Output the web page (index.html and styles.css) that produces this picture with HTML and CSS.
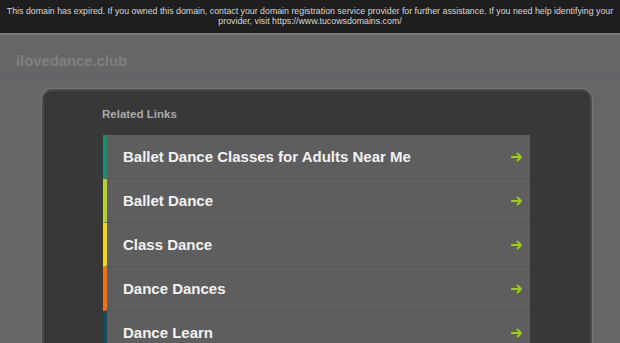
FILE: index.html
```html
<!DOCTYPE html>
<html lang="en">
<head>
    <meta charset="UTF-8">
    <meta name="viewport" content="width=device-width, initial-scale=1.0">
    <title>ilovedance.club</title>
    <link rel="stylesheet" href="styles.css">
</head>
<body>
    <div class="expired-bar">
        This domain has expired. If you owned this domain, contact your domain registration service provider for further assistance. If you need help identifying your provider, visit https://www.tucowsdomains.com/
    </div>

    <div class="header">
        <h1>ilovedance.club</h1>
    </div>

    <div class="panel">
        <h2>Related Links</h2>
        <ul class="links">
            <li class="link c1"><span>Ballet Dance Classes for Adults Near Me</span><svg class="arrow" viewBox="0 0 12 10"><path d="M1 5H11M7 1L11 5L7 9"/></svg></li>
            <li class="link c2"><span>Ballet Dance</span><svg class="arrow" viewBox="0 0 12 10"><path d="M1 5H11M7 1L11 5L7 9"/></svg></li>
            <li class="link c3"><span>Class Dance</span><svg class="arrow" viewBox="0 0 12 10"><path d="M1 5H11M7 1L11 5L7 9"/></svg></li>
            <li class="link c4"><span>Dance Dances</span><svg class="arrow" viewBox="0 0 12 10"><path d="M1 5H11M7 1L11 5L7 9"/></svg></li>
            <li class="link c5"><span>Dance Learn</span><svg class="arrow" viewBox="0 0 12 10"><path d="M1 5H11M7 1L11 5L7 9"/></svg></li>
        </ul>
    </div>
</body>
</html>
```

FILE: styles.css
```css
body {
    font-family: 'Liberation Sans', Arial, sans-serif;
    margin: 0;
    padding: 0;
    background: #666666;
    overflow: hidden;
}

.expired-bar {
    background: #1e1e1e;
    color: #d8d8d8;
    font-size: 8.8px;
    line-height: 9.5px;
    text-align: center;
    height: 26px;
    padding-top: 7px;
    border-bottom: 2px solid #7a7a7a;
    white-space: normal;
}

.header {
    height: 41px;
    border-bottom: 1px solid #5b6166;
    display: flex;
    align-items: center;
    padding-left: 16px;
}

.header h1 {
    margin: 0;
    font-size: 14.8px;
    color: #808080;
    padding-top: 11px;
}

.panel {
    margin: 12px 0 0 42px;
    width: 550px;
    height: 400px;
    background: #383838;
    border: 2px solid #4a4a4a;
    border-radius: 10px;
    box-shadow: 0 0 0 1px #747474;
    padding: 16px 0 0 59px;
    box-sizing: border-box;
}

.panel h2 {
    margin: 0 0 14px -1px;
    font-size: 11.5px;
    color: #a9a9a9;
    line-height: 14px;
}

.links {
    list-style: none;
    margin: 0;
    padding: 0;
    width: 427px;
}

.link {
    height: 44px;
    box-sizing: border-box;
    background: #5e5e5e;
    border-left: 4px solid #1f8a6c;
    border-bottom: 1px solid #565656;
    display: flex;
    align-items: center;
    justify-content: space-between;
    padding: 0 8px 0 16px;
    color: #f2f2f2;
    font-size: 15px;
    font-weight: bold;
}

.c1 { border-left-color: #1f8c6e; }
.c2 { border-left-color: #b5d12e; }
.c3 { border-left-color: #f7d515; }
.c4 { border-left-color: #f47112; }
.c5 { border-left-color: #144c5c; }

.arrow {
    width: 12px;
    height: 10px;
    fill: none;
    stroke: #9acd0c;
    stroke-width: 2;
}
```
